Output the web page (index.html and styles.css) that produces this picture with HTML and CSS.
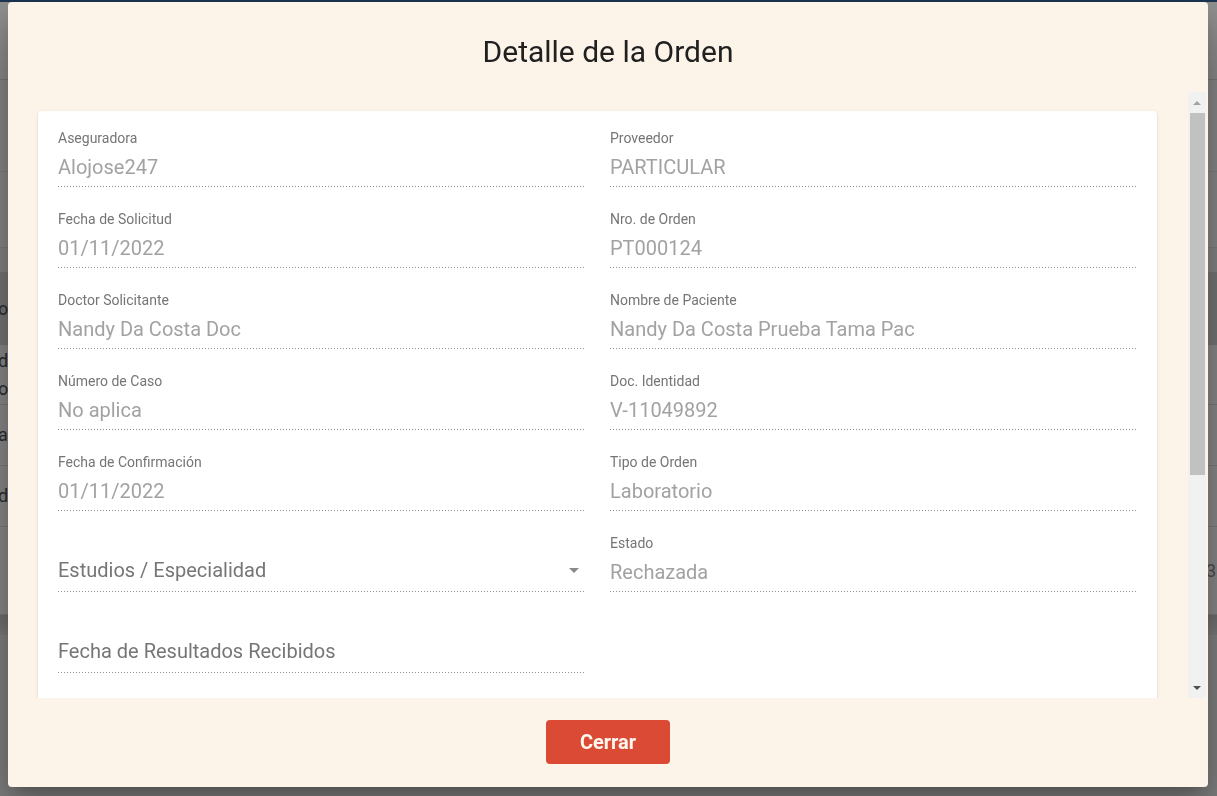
FILE: index.html
```html
<!DOCTYPE html>
<html lang="es">
<head>
<meta charset="utf-8">
<title>Detalle de la Orden</title>
<link rel="stylesheet" href="styles.css">
</head>
<body>
<div class="page">
  <div class="navbar"></div>
  <div class="toolbar"></div>
  <div class="block block-a"></div>
  <div class="block block-b"></div>
  <div class="spacer"></div>
  <div class="thead"><span class="cell">or</span></div>
  <div class="trow r1"><span class="cell">d<br>o</span></div>
  <div class="trow r2"><span class="cell">ar</span></div>
  <div class="trow r3"><span class="cell">d</span></div>
  <div class="trow r4"><span class="cell"></span><span class="num">3</span></div>
  <div class="footer-shade"></div>
  <div class="rest"></div>
</div>

<div class="dialog">
  <h2 class="dialog-title">Detalle de la Orden</h2>
  <div class="dialog-body">
    <div class="scroll-area">
      <div class="card">
        <div class="field"><div class="label">Aseguradora</div><div class="value">Alojose247</div></div>
        <div class="field"><div class="label">Proveedor</div><div class="value">PARTICULAR</div></div>

        <div class="field"><div class="label">Fecha de Solicitud</div><div class="value">01/11/2022</div></div>
        <div class="field"><div class="label">Nro. de Orden</div><div class="value">PT000124</div></div>

        <div class="field"><div class="label">Doctor Solicitante</div><div class="value">Nandy Da Costa Doc</div></div>
        <div class="field"><div class="label">Nombre de Paciente</div><div class="value">Nandy Da Costa Prueba Tama Pac</div></div>

        <div class="field"><div class="label">Número de Caso</div><div class="value">No aplica</div></div>
        <div class="field"><div class="label">Doc. Identidad</div><div class="value">V-11049892</div></div>

        <div class="field"><div class="label">Fecha de Confirmación</div><div class="value">01/11/2022</div></div>
        <div class="field"><div class="label">Tipo de Orden</div><div class="value">Laboratorio</div></div>

        <div class="field field-placeholder"><div class="value placeholder select"><span>Estudios / Especialidad</span><span class="arrow"></span></div></div>
        <div class="field"><div class="label">Estado</div><div class="value">Rechazada</div></div>

        <div class="field field-placeholder"><div class="value placeholder">Fecha de Resultados Recibidos</div></div>
        <div class="field-empty"></div>
      </div>
    </div>
    <div class="scrollbar" aria-hidden="true">
      <div class="sb-btn sb-up"></div>
      <div class="sb-track"><div class="sb-thumb"></div></div>
      <div class="sb-btn sb-down"></div>
    </div>
  </div>
  <div class="dialog-actions">
    <button class="btn-close" type="button">Cerrar</button>
  </div>
</div>
</body>
</html>
```

FILE: styles.css
```css
* { box-sizing: border-box; }

html, body {
  margin: 0;
  padding: 0;
  height: 100%;
  overflow: hidden;
}

body {
  font-family: Roboto, "Liberation Sans", Arial, sans-serif;
  background: #7f7f7f;
}

/* ---------- dimmed page behind the dialog ---------- */
.page {
  display: flex;
  flex-direction: column;
  height: 796px;
}

.navbar {
  height: 2px;
  background: #1c3553;
}

.toolbar {
  height: 78px;
  background: linear-gradient(#939393, #868686);
  border-bottom: 1px solid #767676;
}

.block {
  background: #848484;
  border-bottom: 1px solid #7a7a7a;
}

.block-a { height: 92px; }
.block-b { height: 76px; }

.spacer {
  height: 24px;
  background: #808080;
}

.thead {
  height: 73px;
  background: #727272;
  display: flex;
  align-items: center;
  justify-content: space-between;
}

.trow {
  background: #858585;
  border-bottom: 1px solid #777777;
  display: flex;
  align-items: center;
  justify-content: space-between;
}

.r1 { height: 60px; }
.r2 { height: 61px; }
.r3 { height: 61px; }
.r4 { height: 88px; }

.cell {
  font-size: 18px;
  line-height: 28px;
  color: #2b2b2b;
  margin-left: -2px;
}

.num {
  font-size: 18px;
  color: #4a4a4a;
  margin-right: 1px;
}

.footer-shade {
  height: 20px;
  background: linear-gradient(#6a6a6a, #777777);
}

.rest {
  flex: 1;
  background: #7d7d7d;
}

/* ---------- dialog ---------- */
.dialog {
  position: fixed;
  left: 8px;
  top: 2px;
  width: 1200px;
  height: 785px;
  background: #fcf4e9;
  border-radius: 4px;
  display: flex;
  flex-direction: column;
  box-shadow: 0 11px 15px -7px rgba(0,0,0,.2), 0 24px 38px 3px rgba(0,0,0,.14), 0 9px 46px 8px rgba(0,0,0,.12);
}

.dialog-title {
  margin: 32px 0 22px;
  height: 36px;
  font-size: 30px;
  line-height: 36px;
  font-weight: 400;
  text-align: center;
  color: #202020;
}

.dialog-body {
  flex: 1;
  min-height: 0;
  display: flex;
}

.scroll-area {
  flex: 1;
  min-width: 0;
  overflow: hidden;
  padding: 19px 31px 0 30px;
}

.scrollbar {
  width: 18px;
  margin-right: 2px;
  background: #f1f1f1;
  display: flex;
  flex-direction: column;
}

.sb-btn {
  height: 21px;
  display: flex;
  align-items: center;
  justify-content: center;
}

.sb-up::before {
  content: "";
  border-left: 4px solid transparent;
  border-right: 4px solid transparent;
  border-bottom: 4px solid #a3a3a3;
}

.sb-down::before {
  content: "";
  border-left: 4px solid transparent;
  border-right: 4px solid transparent;
  border-top: 4px solid #505050;
}

.sb-track {
  flex: 1;
  padding: 0 1px 0 2px;
}

.sb-thumb {
  height: 362px;
  background: #c1c1c1;
}

.card {
  background: #ffffff;
  border-radius: 4px;
  box-shadow: 0 2px 1px -1px rgba(0,0,0,.2), 0 1px 1px 0 rgba(0,0,0,.14), 0 1px 3px 0 rgba(0,0,0,.12);
  padding: 19px 20px 80px;
  display: grid;
  grid-template-columns: 1fr 1fr;
  column-gap: 25px;
  row-gap: 24px;
}

.field {
  display: flex;
  flex-direction: column;
  height: 57px;
}

.label {
  font-size: 14px;
  line-height: 16px;
  height: 16px;
  margin-bottom: 10px;
  color: #757575;
  white-space: nowrap;
}

.value {
  font-size: 20px;
  line-height: 22px;
  height: 31px;
  padding-top: 0;
  padding-bottom: 8px;
  color: #a2a2a2;
  white-space: nowrap;
  border-bottom: 1px solid transparent;
  border-image: repeating-linear-gradient(to right, #8f8f8f 0 1px, transparent 1px 3px) 0 0 1 0;
}

.field-placeholder {
  justify-content: flex-end;
}

.placeholder {
  color: #767676;
  padding-top: 0;
  padding-bottom: 10px;
  height: 33px;
}

.select {
  display: flex;
  align-items: center;
  justify-content: space-between;
}

.arrow {
  width: 0;
  height: 0;
  border-left: 5.5px solid transparent;
  border-right: 5.5px solid transparent;
  border-top: 5.5px solid #8a8a8a;
  margin-right: 6px;
}

.dialog-actions {
  display: flex;
  justify-content: center;
  padding: 22px 0 23px;
}

.btn-close {
  width: 124px;
  height: 44px;
  border: none;
  border-radius: 4px;
  background: #db4a35;
  color: #fff6ee;
  font-family: Roboto, "Liberation Sans", Arial, sans-serif;
  font-weight: 700;
  font-size: 20px;
  cursor: pointer;
}
```
